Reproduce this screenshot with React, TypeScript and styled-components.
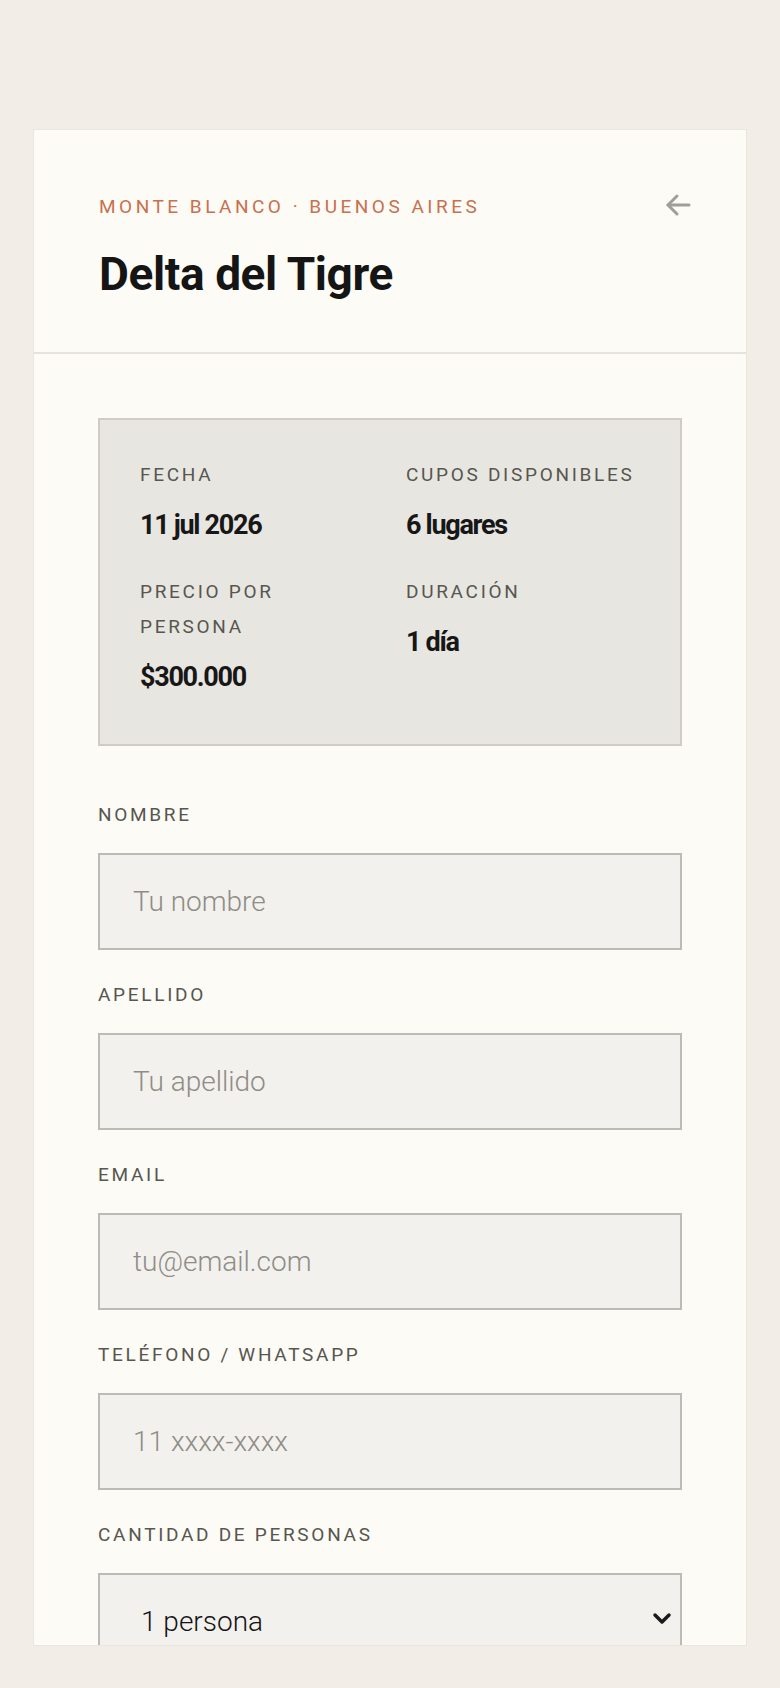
import React, { useState } from "react";
import styled, { createGlobalStyle } from "styled-components";

const GlobalStyle = createGlobalStyle`
    html, body {
        margin: 0;
        padding: 0;
        background: #f3ede8;
    }
    body {
        font-family: Roboto, "Liberation Sans", sans-serif;
        min-height: 1688px;
    }
    * {
        box-sizing: border-box;
    }
`;

const sans = `Roboto, "Liberation Sans", sans-serif`;

const Card = styled.div`
    margin: 129px 33px 0;
    height: 1517px;
    background: #fcfbf6;
    border: 1px solid #e9e5df;
    overflow: hidden;
`;

const Header = styled.header`
    display: flex;
    justify-content: space-between;
    align-items: flex-start;
    padding: 65px 55px 51px 65px;
    border-bottom: 2px solid #e6e3de;
`;

const Eyebrow = styled.div`
    font-family: ${sans};
    font-weight: 400;
    font-size: 19px;
    line-height: 24px;
    letter-spacing: 3.5px;
    color: #c9704e;
    text-transform: uppercase;
`;

const Title = styled.h1`
    margin: 28px 0 0;
    font-family: ${sans};
    font-weight: 700;
    font-size: 46px;
    line-height: 54px;
    letter-spacing: -0.4px;
    color: #151515;
`;

const BackButton = styled.button`
    border: 0;
    background: none;
    padding: 0;
    margin-top: -2px;
    color: #a09e99;
    cursor: pointer;
    display: flex;
`;

const Body = styled.div`
    padding: 64px 64px 0;
`;

const InfoBox = styled.section`
    display: grid;
    grid-template-columns: 1fr 1fr;
    column-gap: 32px;
    row-gap: 32px;
    padding: 37px 40px 50px;
    background: #e8e6e1;
    border: 2px solid #cfccc6;
    margin-bottom: 55px;
`;

const InfoItem = styled.div`
    display: flex;
    flex-direction: column;
`;

const Label = styled.label`
    display: block;
    font-family: ${sans};
    font-weight: 400;
    font-size: 19px;
    line-height: 35px;
    letter-spacing: 2.7px;
    text-transform: uppercase;
    color: #57564f;
`;

const Value = styled.div`
    margin-top: 16px;
    font-family: ${sans};
    font-weight: 700;
    font-size: 27px;
    line-height: 34px;
    letter-spacing: -1.3px;
    color: #171717;
`;

const Field = styled.div`
    display: flex;
    flex-direction: column;
    margin-bottom: 31px;

    ${Label} {
        line-height: 28px;
        margin-bottom: 24px;
    }
`;

const Input = styled.input`
    width: 100%;
    height: 97px;
    padding: 0 33px;
    border: 2px solid #bdbbb5;
    border-radius: 0;
    background: #f2f1ed;
    font-family: ${sans};
    font-weight: 300;
    font-size: 28px;
    color: #1b1b1b;
    outline: none;

    &::placeholder {
        color: #8f8c86;
    }
`;

const SelectWrap = styled.div`
    position: relative;
`;

const Select = styled.select`
    appearance: none;
    width: 100%;
    height: 97px;
    padding: 0 60px 0 41px;
    border: 2px solid #bdbbb5;
    border-radius: 0;
    background: #f2f1ed;
    font-family: ${sans};
    font-weight: 300;
    font-size: 28px;
    color: #141414;
    outline: none;
`;

const Chevron = styled.svg`
    position: absolute;
    right: 10px;
    top: 39px;
    pointer-events: none;
`;

const info = [
    { label: "Fecha", value: "11 jul 2026" },
    { label: "Cupos disponibles", value: "6 lugares" },
    { label: "Precio por persona", value: "$300.000" },
    { label: "Duración", value: "1 día" },
];

const fields = [
    { id: "nombre", label: "Nombre", placeholder: "Tu nombre", type: "text" },
    { id: "apellido", label: "Apellido", placeholder: "Tu apellido", type: "text" },
    { id: "email", label: "Email", placeholder: "tu@email.com", type: "email" },
    { id: "telefono", label: "Teléfono / WhatsApp", placeholder: "11 xxxx-xxxx", type: "tel" },
];

const App = () => {
    const [people, setPeople] = useState("1");

    return (
        <>
            <GlobalStyle />
            <Card>
                <Header>
                    <div>
                        <Eyebrow>Monte Blanco · Buenos Aires</Eyebrow>
                        <Title>Delta del Tigre</Title>
                    </div>
                    <BackButton aria-label="Volver">
                        <svg width="26" height="24" viewBox="0 0 26 24" fill="none" stroke="currentColor" strokeWidth="3" strokeLinecap="round" strokeLinejoin="round">
                            <path d="M24 12H3" />
                            <path d="M12 3L3 12l9 9" />
                        </svg>
                    </BackButton>
                </Header>
                <Body>
                    <InfoBox>
                        {info.map(({ label, value }) => (
                            <InfoItem key={label}>
                                <Label as="span">{label}</Label>
                                <Value>{value}</Value>
                            </InfoItem>
                        ))}
                    </InfoBox>
                    {fields.map((f) => (
                        <Field key={f.id}>
                            <Label htmlFor={f.id}>{f.label}</Label>
                            <Input id={f.id} type={f.type} placeholder={f.placeholder} />
                        </Field>
                    ))}
                    <Field>
                        <Label htmlFor="personas">Cantidad de personas</Label>
                        <SelectWrap>
                            <Select id="personas" value={people} onChange={(e) => setPeople(e.target.value)}>
                                <option value="1">1 persona</option>
                                <option value="2">2 personas</option>
                                <option value="3">3 personas</option>
                                <option value="4">4 personas</option>
                            </Select>
                            <Chevron width="20" height="14" viewBox="0 0 20 14" fill="none" stroke="#1b1b1b" strokeWidth="3.5" strokeLinecap="round" strokeLinejoin="round">
                                <path d="M3 3l7 7 7-7" />
                            </Chevron>
                        </SelectWrap>
                    </Field>
                </Body>
            </Card>
        </>
    );
};

export default App;
